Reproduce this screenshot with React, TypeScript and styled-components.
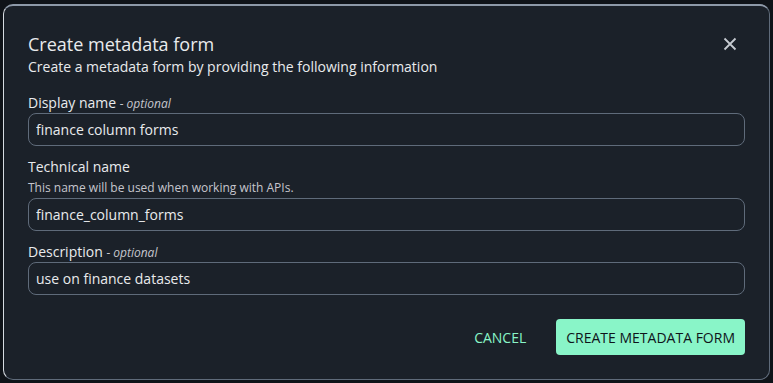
import React from "react";
import styled, { createGlobalStyle } from "styled-components";

const Global = createGlobalStyle`
  html, body { margin: 0; padding: 0; background: #0f1318; }
  body { font-family: "Open Sans", "Noto Sans", sans-serif; }
  * { box-sizing: border-box; }
`;

const Page = styled.div`
  width: 773px;
  height: 383px;
  padding: 4px 3px 3px 3px;
  background: #0f1318;
  display: flex;
`;

const Modal = styled.div`
  flex: 1;
  background: #1b2129;
  border: 1px solid #5f6b7a;
  border-top: 2px solid #8d99a8;
  border-left: 1px solid #d6dbe1;
  border-radius: 10px;
  padding: 26px 24px 24px 24px;
  display: flex;
  flex-direction: column;
`;

const Header = styled.div`
  display: flex;
  justify-content: space-between;
  align-items: flex-start;
`;

const Title = styled.h2`
  margin: 0;
  font-size: 18px;
  font-weight: 400;
  color: #e9ebed;
  line-height: 24px;
`;

const Subtitle = styled.p`
  margin: 1px 0 0 0;
  font-size: 14px;
  color: #e9ebed;
  line-height: 20px;
`;

const Close = styled.button`
  background: none;
  border: none;
  padding: 0;
  margin-top: 5px;
  margin-right: 8px;
  width: 14px;
  height: 14px;
  cursor: pointer;
  display: flex;
`;

const Form = styled.div`
  margin-top: 17px;
  display: flex;
  flex-direction: column;
  gap: 12px;
`;

const Field = styled.div`
  display: flex;
  flex-direction: column;
`;

const Label = styled.label`
  font-size: 14px;
  color: #e9ebed;
  line-height: 18px;
`;

const Optional = styled.i`
  font-size: 12px;
  color: #c6c6cd;
`;

const Hint = styled.div`
  font-size: 12px;
  color: #c6c6cd;
  line-height: 16px;
  margin-top: 4px;
  margin-bottom: 2px;
`;

const Input = styled.input`
  height: 33px;
  width: 100%;
  background: #1b2129;
  border: 1px solid #5f6b7a;
  border-radius: 8px;
  padding: 0 7px;
  font-family: inherit;
  font-size: 14px;
  color: #e9ebed;
  outline: none;
`;

const Footer = styled.div`
  margin-top: auto;
  display: flex;
  justify-content: flex-end;
  align-items: center;
  gap: 10px;
`;

const LinkButton = styled.button`
  background: none;
  border: none;
  font-family: inherit;
  font-size: 14px;
  color: #89f5c8;
  padding: 0 20px;
  height: 35px;
  cursor: pointer;
`;

const PrimaryButton = styled.button`
  background: #89f5c8;
  border: none;
  border-radius: 4px;
  font-family: inherit;
  font-size: 14px;
  color: #0f141a;
  padding: 0 10px;
  height: 36px;
  cursor: pointer;
`;

export default function App() {
  return (
    <>
      <Global />
      <Page>
        <Modal>
          <Header>
            <div>
              <Title>Create metadata form</Title>
              <Subtitle>Create a metadata form by providing the following information</Subtitle>
            </div>
            <Close aria-label="Close">
              <svg width="14" height="14" viewBox="0 0 14 14">
                <path d="M1.5 1.5l11 11M12.5 1.5l-11 11" stroke="#c6cbd1" strokeWidth="1.8" />
              </svg>
            </Close>
          </Header>
          <Form>
            <Field>
              <Label>
                Display name <Optional>- optional</Optional>
              </Label>
              <Input defaultValue="finance column forms" />
            </Field>
            <Field>
              <Label>Technical name</Label>
              <Hint>This name will be used when working with APIs.</Hint>
              <Input defaultValue="finance_column_forms" />
            </Field>
            <Field>
              <Label>
                Description <Optional>- optional</Optional>
              </Label>
              <Input defaultValue="use on finance datasets" />
            </Field>
          </Form>
          <Footer>
            <LinkButton>CANCEL</LinkButton>
            <PrimaryButton>CREATE METADATA FORM</PrimaryButton>
          </Footer>
        </Modal>
      </Page>
    </>
  );
}
